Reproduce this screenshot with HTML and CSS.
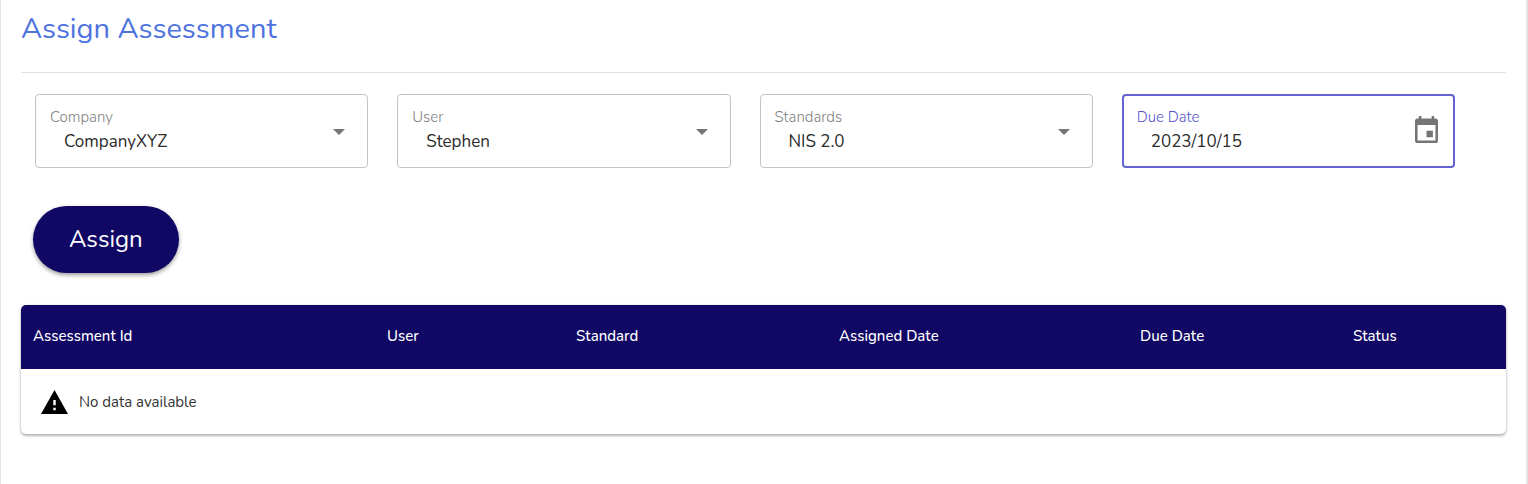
FILE: index.html
```
<!DOCTYPE html>
<html lang="en">
<head>
<meta charset="utf-8">
<meta name="viewport" content="width=device-width, initial-scale=1">
<title>Assign Assessment</title>
<link rel="stylesheet" href="styles.css">
</head>
<body>
<main class="panel">
  <h1 class="title">Assign Assessment</h1>
  <form class="form">
    <div class="fields">
      <div class="field">
        <label class="label" for="company">Company</label>
        <select class="control" id="company"><option>CompanyXYZ</option></select>
        <svg class="arrow" viewBox="0 0 12 6" aria-hidden="true"><path d="M0 0h12L6 6z"/></svg>
      </div>
      <div class="field">
        <label class="label" for="user">User</label>
        <select class="control" id="user"><option>Stephen</option></select>
        <svg class="arrow" viewBox="0 0 12 6" aria-hidden="true"><path d="M0 0h12L6 6z"/></svg>
      </div>
      <div class="field">
        <label class="label" for="standards">Standards</label>
        <select class="control" id="standards"><option>NIS 2.0</option></select>
        <svg class="arrow" viewBox="0 0 12 6" aria-hidden="true"><path d="M0 0h12L6 6z"/></svg>
      </div>
      <div class="field field-active">
        <label class="label" for="due">Due Date</label>
        <input class="control" id="due" type="text" value="2023/10/15">
        <button class="calendar" type="button" aria-label="Open calendar">
          <svg viewBox="3 1 18 21" preserveAspectRatio="none" aria-hidden="true"><path d="M19 3h-1V1h-2v2H8V1H6v2H5a2 2 0 0 0-2 2v15a2 2 0 0 0 2 2h14a2 2 0 0 0 2-2V5a2 2 0 0 0-2-2zm0 17H5V8h14zM12 12.500h5v5h-5z"/></svg>
        </button>
      </div>
    </div>
    <button class="assign" type="button">Assign</button>
  </form>
  <table class="table">
    <colgroup>
      <col class="col-id"><col class="col-user"><col class="col-standard"><col class="col-assigned"><col class="col-due"><col class="col-status">
    </colgroup>
    <thead>
      <tr><th>Assessment Id</th><th>User</th><th>Standard</th><th>Assigned Date</th><th>Due Date</th><th>Status</th></tr>
    </thead>
    <tbody>
      <tr><td colspan="6"><div class="empty">
        <svg class="warning" viewBox="1 2 22 19" preserveAspectRatio="none" aria-hidden="true"><path d="M1 21h22L12 2zm12-3h-2v-2h2zm0-4h-2v-4h2z"/></svg>
        <span>No data available</span>
      </div></td></tr>
    </tbody>
  </table>
</main>
</body>
</html>
```
FILE: styles.css
```
* {
  box-sizing: border-box;
}

body {
  margin: 0;
  background: #fff;
  color: #333;
  font-family: Nunito, Roboto, "Noto Sans", sans-serif;
  font-size: 15px;
}

.panel {
  min-height: 100vh;
  padding: 8px 20px 48px;
  border: solid #e3e3e6;
  border-width: 0 2px 0 1px;
}

.title {
  margin: 0;
  padding-bottom: 22px;
  border-bottom: 1px solid #e2e2e2;
  color: #4e73df;
  font-size: 29px;
  font-weight: 400;
  line-height: 42px;
}

.form {
  padding: 21px 51px 32px 14px;
}

.fields {
  display: grid;
  grid-template-columns: repeat(4, minmax(0, 1fr));
  gap: 29px;
}

.field {
  position: relative;
  display: flex;
  flex-direction: column;
  padding: 12px 14px 12px;
  border: 1px solid #c4c4c4;
  border-radius: 4px;
}

.field-active {
  padding: 11px 13px 11px;
  border: 2px solid #6464d0;
}

.label {
  color: #808080;
  font-size: 15px;
  font-weight: 300;
  line-height: 20px;
}

.field-active .label {
  color: #5454cb;
}

.control {
  appearance: none;
  width: 100%;
  height: 28px;
  margin: 0;
  padding: 0 14px;
  border: 0;
  outline: 0;
  background: transparent;
  color: #2b2b2b;
  font: inherit;
  font-size: 17px;
  font-weight: 400;
}

.arrow {
  position: absolute;
  top: 50%;
  right: 22px;
  width: 12px;
  height: 6px;
  margin-top: -2px;
  fill: #757575;
  pointer-events: none;
}

.calendar {
  position: absolute;
  top: 50%;
  right: 15px;
  width: 23px;
  height: 27px;
  margin-top: -15px;
  padding: 0;
  border: 0;
  background: none;
}

.calendar svg {
  display: block;
  width: 100%;
  height: 100%;
  fill: #757575;
}

.assign {
  display: block;
  margin: 38px 0 0 -2px;
  padding: 15px 36px 16px;
  border: 0;
  border-radius: 34px;
  background: #100864;
  box-shadow: 0 2px 4px rgba(0, 0, 0, 0.4);
  color: #fff;
  font: inherit;
  font-size: 24px;
  line-height: 36px;
}

.table {
  width: 100%;
  table-layout: fixed;
  border-spacing: 0;
  border-radius: 5px;
  overflow: hidden;
  background: #fff;
  box-shadow: 0 2px 3px rgba(0, 0, 0, 0.28), 0 0 3px rgba(0, 0, 0, 0.1);
}

.col-id { width: 23.84%; }
.col-user { width: 12.73%; }
.col-standard { width: 17.71%; }
.col-assigned { width: 20.27%; }
.col-due { width: 14.34%; }
.col-status { width: 11.11%; }

.table th {
  height: 64px;
  padding: 0 12px 2px;
  background: #100864;
  color: #fff;
  font-weight: 500;
  text-align: left;
}

.table td {
  height: 65px;
  padding: 0 20px;
}

.empty {
  display: flex;
  align-items: center;
  gap: 11px;
}

.warning {
  width: 27px;
  height: 24px;
  fill: #000;
}
```
